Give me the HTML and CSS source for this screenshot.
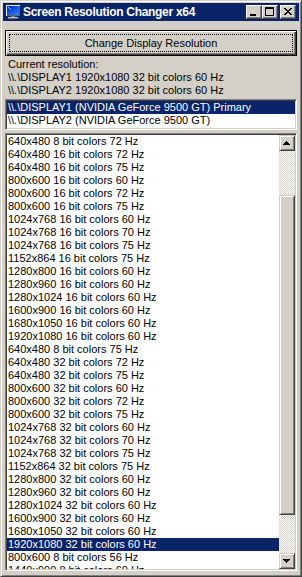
FILE: index.html
```html
<!DOCTYPE html>
<html>
<head>
<meta charset="utf-8">
<link rel="stylesheet" href="styles.css">
</head>
<body>
<div class="window">
  <div class="titlebar">
    <svg class="app-icon" viewBox="0 0 16 16" shape-rendering="crispEdges">
      <defs>
        <linearGradient id="scr" x1="0" y1="0" x2="1" y2="1">
          <stop offset="0" stop-color="#0018C8"/>
          <stop offset="1" stop-color="#2C8CFF"/>
        </linearGradient>
      </defs>
      <rect x="1" y="1" width="14" height="11" fill="#E8E8E8"/>
      <rect x="2" y="2" width="13" height="10" fill="#606060"/>
      <rect x="2" y="2" width="12" height="9" fill="url(#scr)"/>
      <rect x="3" y="3" width="1" height="1" fill="#A0C8FF"/>
      <rect x="4" y="4" width="1" height="1" fill="#A0C8FF"/>
      <rect x="5" y="5" width="1" height="1" fill="#80B0FF"/>
      <rect x="6" y="12" width="4" height="1" fill="#808080"/>
      <rect x="3" y="13" width="10" height="2" fill="#C0C0C0"/>
      <rect x="3" y="14" width="10" height="1" fill="#707070"/>
    </svg>
    <span class="title">Screen Resolution Changer x64</span>
    <div class="caption-buttons">
      <div class="cap">
        <svg viewBox="0 0 14 12" shape-rendering="crispEdges"><path d="M3 8h6v2H3z" fill="#000"/></svg>
      </div>
      <div class="cap">
        <svg viewBox="0 0 14 12" shape-rendering="crispEdges"><path d="M2 1h9v9H2zM3 3v6h7V3z" fill="#000" fill-rule="evenodd"/></svg>
      </div>
      <div class="cap close">
        <svg viewBox="0 0 14 12" shape-rendering="crispEdges" fill="#000">
          <rect x="3" y="2" width="2" height="1"/><rect x="9" y="2" width="2" height="1"/>
          <rect x="4" y="3" width="2" height="1"/><rect x="8" y="3" width="2" height="1"/>
          <rect x="5" y="4" width="4" height="1"/>
          <rect x="6" y="5" width="2" height="1"/>
          <rect x="5" y="6" width="4" height="1"/>
          <rect x="4" y="7" width="2" height="1"/><rect x="8" y="7" width="2" height="1"/>
          <rect x="3" y="8" width="2" height="1"/><rect x="9" y="8" width="2" height="1"/>
        </svg>
      </div>
    </div>
  </div>
  <div class="client">
    <div class="btn-default"><span class="focus">Change Display Resolution</span></div>
    <div class="info">
      <div>Current resolution:</div>
      <div>\\.\DISPLAY1 1920x1080 32 bit colors 60 Hz</div>
      <div>\\.\DISPLAY2 1920x1080 32 bit colors 60 Hz</div>
    </div>
    <div class="listbox displays">
      <div class="row sel">\\.\DISPLAY1 (NVIDIA GeForce 9500 GT) Primary</div>
      <div class="row">\\.\DISPLAY2 (NVIDIA GeForce 9500 GT)</div>
    </div>
    <div class="listbox modes">
      <div class="items">
        <div class="row">640x480 8 bit colors 72 Hz</div>
        <div class="row">640x480 16 bit colors 72 Hz</div>
        <div class="row">640x480 16 bit colors 75 Hz</div>
        <div class="row">800x600 16 bit colors 60 Hz</div>
        <div class="row">800x600 16 bit colors 72 Hz</div>
        <div class="row">800x600 16 bit colors 75 Hz</div>
        <div class="row">1024x768 16 bit colors 60 Hz</div>
        <div class="row">1024x768 16 bit colors 70 Hz</div>
        <div class="row">1024x768 16 bit colors 75 Hz</div>
        <div class="row">1152x864 16 bit colors 75 Hz</div>
        <div class="row">1280x800 16 bit colors 60 Hz</div>
        <div class="row">1280x960 16 bit colors 60 Hz</div>
        <div class="row">1280x1024 16 bit colors 60 Hz</div>
        <div class="row">1600x900 16 bit colors 60 Hz</div>
        <div class="row">1680x1050 16 bit colors 60 Hz</div>
        <div class="row">1920x1080 16 bit colors 60 Hz</div>
        <div class="row">640x480 8 bit colors 75 Hz</div>
        <div class="row">640x480 32 bit colors 72 Hz</div>
        <div class="row">640x480 32 bit colors 75 Hz</div>
        <div class="row">800x600 32 bit colors 60 Hz</div>
        <div class="row">800x600 32 bit colors 72 Hz</div>
        <div class="row">800x600 32 bit colors 75 Hz</div>
        <div class="row">1024x768 32 bit colors 60 Hz</div>
        <div class="row">1024x768 32 bit colors 70 Hz</div>
        <div class="row">1024x768 32 bit colors 75 Hz</div>
        <div class="row">1152x864 32 bit colors 75 Hz</div>
        <div class="row">1280x800 32 bit colors 60 Hz</div>
        <div class="row">1280x960 32 bit colors 60 Hz</div>
        <div class="row">1280x1024 32 bit colors 60 Hz</div>
        <div class="row">1600x900 32 bit colors 60 Hz</div>
        <div class="row">1680x1050 32 bit colors 60 Hz</div>
        <div class="row sel">1920x1080 32 bit colors 60 Hz</div>
        <div class="row">800x600 8 bit colors 56 Hz</div>
        <div class="row">1440x900 8 bit colors 60 Hz</div>
      </div>
      <div class="scrollbar">
        <div class="sb-btn">
          <svg viewBox="0 0 14 14" shape-rendering="crispEdges"><path d="M6 5h1v1h1v1h1v1h1v1H3V8h1V7h1V6h1z" fill="#000"/></svg>
        </div>
        <div class="track">
          <div class="track-top"></div>
          <div class="thumb"></div>
          <div class="track-rest"></div>
        </div>
        <div class="sb-btn">
          <svg viewBox="0 0 14 14" shape-rendering="crispEdges"><path d="M3 5h7v1h-1v1h-1v1h-1v1h-1V8H5V7H4V6H3z" fill="#000"/></svg>
        </div>
      </div>
    </div>
  </div>
</div>
</body>
</html>
```
FILE: styles.css
```css
* { box-sizing: border-box; }
html, body { margin: 0; padding: 0; }
body {
  width: 302px;
  height: 577px;
  overflow: hidden;
  background: #D4D0C8;
  font-family: "Liberation Sans", Arial, sans-serif;
  font-size: 11px;
  color: #000;
}
.window {
  width: 302px;
  height: 577px;
  background: #D4D0C8;
  border: 1px solid;
  border-color: #D4D0C8 #404040 #404040 #D4D0C8;
  box-shadow: inset 1px 1px #fff, inset -1px -1px #808080;
  padding: 2px;
  display: flex;
  flex-direction: column;
}
.titlebar {
  height: 18px;
  flex: none;
  background: #0A246A;
  color: #fff;
  display: flex;
  align-items: center;
  padding-left: 2px;
}
.app-icon { width: 16px; height: 16px; margin-right: 2px; flex: none; display: block; }
.title {
  flex: 1;
  font-weight: bold;
  font-size: 12px;
  letter-spacing: -0.3px;
  white-space: nowrap;
  overflow: hidden;
}
.caption-buttons { display: flex; margin-right: 3px; }
.cap {
  width: 16px;
  height: 14px;
  background: #D4D0C8;
  border: 1px solid;
  border-color: #fff #404040 #404040 #fff;
  box-shadow: inset -1px -1px #808080;
}
.cap svg { display: block; width: 14px; height: 12px; }
.cap.close { margin-left: 2px; }
.client {
  flex: 1;
  padding: 0 2px;
  display: flex;
  flex-direction: column;
}
.btn-default {
  height: 26px;
  margin-top: 9px;
  border: 1px solid #000;
  background: #D4D0C8;
  box-shadow: inset 1px 1px #fff, inset -1px -1px #404040, inset -2px -2px #808080;
  padding: 3px;
  display: flex;
}
.focus {
  flex: 1;
  border: 1px dotted #000;
  display: flex;
  align-items: center;
  justify-content: center;
  white-space: nowrap;
}
.info { margin-top: 2px; line-height: 13px; padding-left: 3px; white-space: nowrap; }
.listbox {
  background: #fff;
  border: 1px solid;
  border-color: #808080 #fff #fff #808080;
  box-shadow: inset 1px 1px #404040, inset -1px -1px #D4D0C8;
  padding: 1px;
}
.displays { margin-top: 2px; height: 31px; flex: none; }
.row {
  height: 13px;
  line-height: 13px;
  padding-left: 1px;
  white-space: nowrap;
  overflow: hidden;
}
.row.sel { background: #0A246A; color: #fff; }
.modes {
  margin-top: 3px;
  height: 438px;
  flex: none;
  display: flex;
  overflow: hidden;
}
.items { flex: 1; min-width: 0; overflow: hidden; }
.scrollbar {
  width: 16px;
  flex: none;
  display: flex;
  flex-direction: column;
}
.sb-btn, .thumb {
  background: #D4D0C8;
  border: 1px solid;
  border-color: #D4D0C8 #404040 #404040 #D4D0C8;
  box-shadow: inset 1px 1px #fff, inset -1px -1px #808080;
}
.sb-btn { height: 16px; flex: none; }
.sb-btn svg { display: block; width: 14px; height: 14px; }
.track {
  flex: 1;
  display: flex;
  flex-direction: column;
  background: repeating-conic-gradient(#fff 0 25%, #D4D0C8 0 50%) 0 0 / 2px 2px;
}
.track-top { height: 44px; flex: none; }
.thumb { height: 320px; flex: none; }
.track-rest { flex: 1; }
```
